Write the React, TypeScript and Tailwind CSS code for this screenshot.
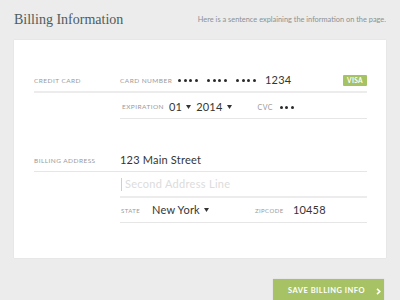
import React from "react";

const Dots = ({ n }: { n: number }) => (
  <span className="flex items-center gap-[2.6px]">
    {Array.from({ length: n }).map((_, i) => (
      <span key={i} className="block w-[3px] h-[3px] rounded-full bg-[#2a2a2a]" />
    ))}
  </span>
);

const Caret = () => (
  <svg width="5" height="4" viewBox="0 0 5 4" className="ml-[4px]">
    <path d="M0 0 L5 0 L2.5 4 Z" fill="#333" />
  </svg>
);

const label = "text-[6.5px] tracking-[0.45px] uppercase text-[#9a9a9a]";
const value = "text-[11px] text-[#353535] tracking-[0.2px]";

export default function App() {
  return (
    <div
      className="w-[400px] h-[300px] overflow-hidden bg-[#ebeceb] relative"
      style={{ fontFamily: "Lato, 'Open Sans', sans-serif" }}
    >
      <div className="flex items-center justify-between px-[14px] h-[37px] pt-[1px]">
        <div
          className="text-[14px] text-[#4d5c61]"
          style={{ fontFamily: "'Liberation Serif', serif" }}
        >
          Billing Information
        </div>
        <div className="text-[7.4px] text-[#8d9194] pt-[2px]">
          Here is a sentence explaining the information on the page.
        </div>
      </div>

      <div className="mx-[14px] mt-[3px] h-[218px] bg-white shadow-[0_0_1px_rgba(0,0,0,0.12)] pt-[30px] pl-[20px] pr-[19px]">
        {/* Credit card */}
        <div className="flex">
          <div className="w-[86px] h-[21px] flex items-center border-b-2 border-[#ececec] box-content">
            <span className={label}>Credit Card</span>
          </div>
          <div className="flex-1">
            <div className="h-[21px] flex items-center border-b-2 border-[#ececec] box-content">
              <span className={label + " w-[58px]"}>Card Number</span>
              <span className="w-[29px]"><Dots n={4} /></span>
              <span className="w-[29px]"><Dots n={4} /></span>
              <span className="w-[29px]"><Dots n={4} /></span>
              <span className={value}>1234</span>
              <span className="ml-auto bg-[#a6c363] text-white text-[6.5px] font-bold tracking-[0.4px] px-[4px] h-[11px] flex items-center rounded-[1px]">
                VISA
              </span>
            </div>
            <div className="h-[22px] flex items-center pt-[3px] border-b border-[#e6e6e6] box-content">
              <span className={label + " w-[49px] pl-[2px]"}>Expiration</span>
              <span className={value + " flex items-center"}>01<Caret /></span>
              <span className={value + " flex items-center ml-[5px]"}>2014<Caret /></span>
              <span className={label + " ml-[26px] w-[22px] text-[7px]"}>cvc</span>
              <Dots n={3} />
            </div>
          </div>
        </div>

        {/* Billing address */}
        <div className="flex mt-[31px]">
          <div className="w-[86px] h-[21px] flex items-center border-b border-[#e6e6e6] box-content">
            <span className={label}>Billing Address</span>
          </div>
          <div className="flex-1">
            <div className="h-[21px] flex items-center border-b border-[#e6e6e6] box-content">
              <span className={value + " text-[11.5px]"}>123 Main Street</span>
            </div>
          </div>
        </div>
        <div className="flex">
          <div className="w-[86px]" />
          <div className="flex-1">
            <div className="h-[24px] flex items-center border-b-2 border-[#ececec] box-content">
              <span className="block w-[1px] h-[13px] bg-[#c9d9a6] ml-[1px] mr-[3px]" />
              <span className="text-[11px] text-[#dcdcdc] tracking-[0.3px]">Second Address Line</span>
            </div>
            <div className="h-[24px] flex items-center border-b border-[#e6e6e6] box-content">
              <span className={label + " w-[32px] text-[6px] pl-[1px]"}>State</span>
              <span className={value + " flex items-center"}>New York<Caret /></span>
              <span className={label + " ml-[46px] w-[38px] text-[6px]"}>Zipcode</span>
              <span className={value}>10458</span>
            </div>
          </div>
        </div>
      </div>

      <div className="flex justify-end px-[16px] mt-[21px]">
        <div className="w-[111px] h-[24px] bg-[#a6c265] flex items-center pl-[15px] shadow-[0_0_1px_rgba(0,0,0,0.15)]">
          <span className="text-white text-[7.5px] font-bold tracking-[0.5px]">SAVE BILLING INFO</span>
          <svg width="5" height="7" viewBox="0 0 5 7" className="ml-[11px]">
            <path d="M1 0.8 L3.8 3.5 L1 6.2" stroke="white" strokeWidth="1.6" fill="none" />
          </svg>
        </div>
      </div>
    </div>
  );
}
